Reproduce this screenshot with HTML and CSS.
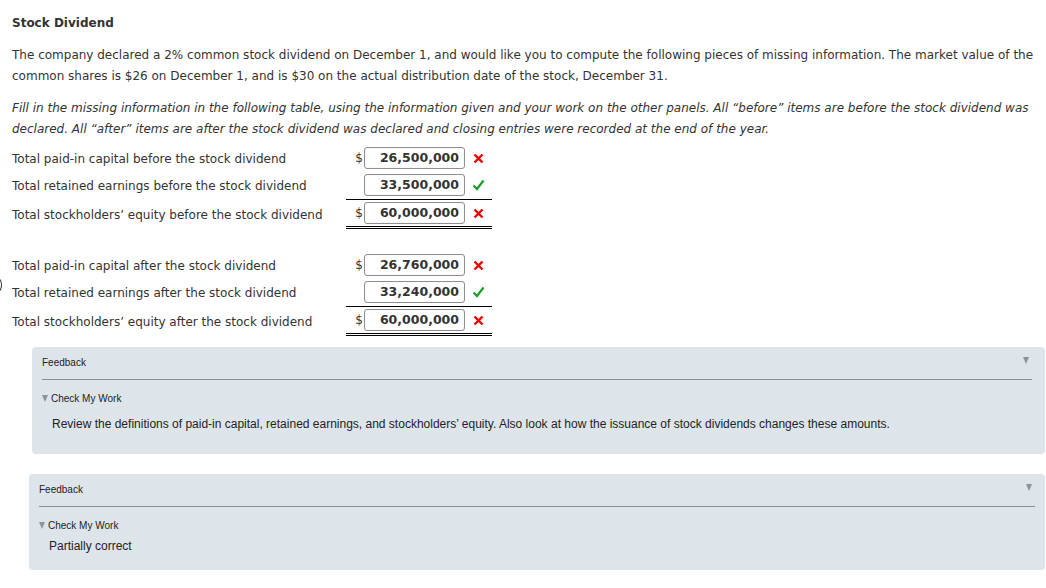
FILE: index.html
```html
<!DOCTYPE html>
<html>
<head>
<meta charset="utf-8">
<link rel="stylesheet" href="styles.css">
</head>
<body>
<span class="edge-mark"></span>
<div class="page">
  <h1 class="title">Stock Dividend</h1>
  <p class="intro">The company declared a 2% common stock dividend on December 1, and would like you to compute the following pieces of missing information. The market value of the common shares is $26 on December 1, and is $30 on the actual distribution date of the stock, December 31.</p>
  <p class="instr">Fill in the missing information in the following table, using the information given and your work on the other panels. All “before” items are before the stock dividend was declared. All “after” items are after the stock dividend was declared and closing entries were recorded at the end of the year.</p>

  <div class="table">
    <div class="row">
      <div class="label">Total paid-in capital before the stock dividend</div>
      <div class="amt">
        <span class="dollar">$</span><span class="box">26,500,000</span><span class="mark"><svg width="11" height="11" viewBox="0 0 11 11"><path d="M1.5 1.5 L9.5 9.5 M9.5 1.5 L1.5 9.5" stroke="#f20000" stroke-width="2.4" fill="none"/></svg></span>
      </div>
    </div>
    <div class="row">
      <div class="label">Total retained earnings before the stock dividend</div>
      <div class="amt">
        <span class="dollar"></span><span class="box">33,500,000</span><span class="mark"><svg width="13" height="12" viewBox="0 0 13 12"><path d="M1.5 6.5 L5 10 L11.5 1.5" fill="none" stroke="#1a9e2a" stroke-width="2.2"/></svg></span>
      </div>
    </div>
    <div class="row total">
      <div class="label">Total stockholders’ equity before the stock dividend</div>
      <div class="amt">
        <span class="dollar">$</span><span class="box">60,000,000</span><span class="mark"><svg width="11" height="11" viewBox="0 0 11 11"><path d="M1.5 1.5 L9.5 9.5 M9.5 1.5 L1.5 9.5" stroke="#f20000" stroke-width="2.4" fill="none"/></svg></span>
      </div>
    </div>

    <div class="row gap">
      <div class="label">Total paid-in capital after the stock dividend</div>
      <div class="amt">
        <span class="dollar">$</span><span class="box">26,760,000</span><span class="mark"><svg width="11" height="11" viewBox="0 0 11 11"><path d="M1.5 1.5 L9.5 9.5 M9.5 1.5 L1.5 9.5" stroke="#f20000" stroke-width="2.4" fill="none"/></svg></span>
      </div>
    </div>
    <div class="row">
      <div class="label">Total retained earnings after the stock dividend</div>
      <div class="amt">
        <span class="dollar"></span><span class="box">33,240,000</span><span class="mark"><svg width="13" height="12" viewBox="0 0 13 12"><path d="M1.5 6.5 L5 10 L11.5 1.5" fill="none" stroke="#1a9e2a" stroke-width="2.2"/></svg></span>
      </div>
    </div>
    <div class="row total">
      <div class="label">Total stockholders’ equity after the stock dividend</div>
      <div class="amt">
        <span class="dollar">$</span><span class="box">60,000,000</span><span class="mark"><svg width="11" height="11" viewBox="0 0 11 11"><path d="M1.5 1.5 L9.5 9.5 M9.5 1.5 L1.5 9.5" stroke="#f20000" stroke-width="2.4" fill="none"/></svg></span>
      </div>
    </div>
  </div>
</div>

<div class="feedback fb1">
  <div class="fb-head"><span>Feedback</span><span class="fb-arrow"></span></div>
  <div class="fb-check"><span class="tri"></span>Check My Work</div>
  <div class="fb-text">Review the definitions of paid-in capital, retained earnings, and stockholders’ equity. Also look at how the issuance of stock dividends changes these amounts.</div>
</div>

<div class="feedback fb2">
  <div class="fb-head"><span>Feedback</span><span class="fb-arrow"></span></div>
  <div class="fb-check"><span class="tri"></span>Check My Work</div>
  <div class="fb-text short">Partially correct</div>
</div>
</body>
</html>
```
FILE: styles.css
```css
html, body {
  margin: 0;
  padding: 0;
  background: #fff;
}
body {
  font-family: "DejaVu Sans", Verdana, sans-serif;
  color: #333;
  position: relative;
}
.edge-mark {
  position: absolute;
  left: -6px;
  top: 278px;
  width: 6px;
  height: 12px;
  border: 1.5px solid #333;
  border-radius: 50%;
}
.page {
  padding: 15px 12px 0 12px;
}
.title {
  font-size: 12px;
  font-weight: bold;
  margin: 0 0 14px 0;
  line-height: 16px;
}
.intro, .instr {
  font-size: 12px;
  line-height: 21px;
  margin: 0 0 11px 0;
}
.instr {
  font-style: italic;
  margin-bottom: 7px;
}
.table {
  display: flex;
  flex-direction: column;
  font-size: 12px;
}
.row {
  display: flex;
  align-items: center;
  margin-bottom: 5px;
}
.row.total {
  margin-bottom: 0;
  margin-top: -2px;
}
.row.gap {
  margin-top: 25px;
}
.label {
  width: 334px;
  padding-top: 2px;
}
.row.total .label {
  padding-top: 1px;
}
.amt {
  display: flex;
  align-items: center;
  width: 146px;
}
.row.total .amt {
  border-top: 1px solid #000;
  border-bottom: 3px double #000;
  padding: 2px 0 2px 0;
}
.dollar {
  width: 18px;
  text-align: right;
  padding-right: 1px;
  box-sizing: border-box;
}
.box {
  width: 101px;
  height: 22px;
  box-sizing: border-box;
  border: 1px solid #8f8f8f;
  border-radius: 3px;
  box-shadow: inset 0 0 1px #ccc;
  font-weight: bold;
  text-align: right;
  padding-right: 5px;
  line-height: 20px;
  font-size: 12.5px;
  color: #333;
}
.mark {
  width: 27px;
  display: flex;
  justify-content: center;
  align-items: center;
}
.feedback {
  font-family: "Liberation Sans", Arial, sans-serif;
  background: #dee5ea;
  border-radius: 4px;
  color: #222;
}
.fb1 {
  margin: 11px 1px 0 32px;
  padding: 9px 13px 23px 10px;
}
.fb2 {
  margin: 20px 1px 0 29px;
  padding: 9px 10px 17px 10px;
}
.fb-head {
  display: flex;
  justify-content: space-between;
  align-items: flex-start;
  font-size: 10px;
  line-height: 14px;
  padding-bottom: 9px;
  border-bottom: 1px solid #8a8f93;
}
.fb-arrow {
  width: 0;
  height: 0;
  border-left: 3.5px solid transparent;
  border-right: 3.5px solid transparent;
  border-top: 7px solid #8e9397;
  margin-top: 1px;
  margin-right: 3px;
}
.fb-check {
  font-size: 10px;
  line-height: 14px;
  margin-top: 12px;
  display: flex;
  align-items: center;
}
.tri {
  width: 0;
  height: 0;
  border-left: 3.5px solid transparent;
  border-right: 3.5px solid transparent;
  border-top: 7px solid #8e9397;
  margin-right: 3px;
  margin-top: -2px;
}
.fb-text {
  font-size: 12px;
  line-height: 14px;
  margin: 11px 0 0 10px;
}
.fb-text.short {
  margin-top: 6px;
}
```
